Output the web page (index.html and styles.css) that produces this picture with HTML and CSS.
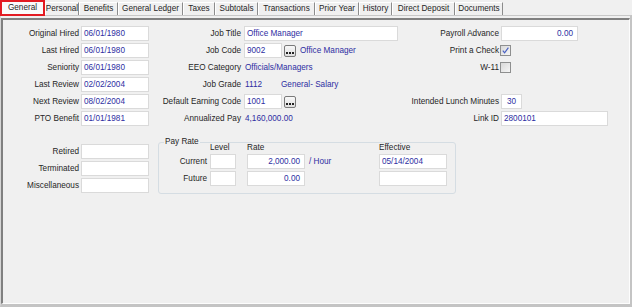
FILE: index.html
```html
<!DOCTYPE html>
<html>
<head>
<meta charset="utf-8">
<title>Employee - General</title>
<link rel="stylesheet" href="styles.css">
</head>
<body>
<div class="window">
  <div class="tabs">
    <div class="tab active">General</div>
    <div class="tab">Personal</div>
    <div class="tab">Benefits</div>
    <div class="tab">General Ledger</div>
    <div class="tab">Taxes</div>
    <div class="tab">Subtotals</div>
    <div class="tab">Transactions</div>
    <div class="tab">Prior Year</div>
    <div class="tab">History</div>
    <div class="tab">Direct Deposit</div>
    <div class="tab">Documents</div>
  </div>
  <div class="panel">
    <div class="inner">
      <div class="top">
        <div class="col col-left">
          <span class="lbl">Original Hired</span><div class="box">06/01/1980</div>
          <span class="lbl">Last Hired</span><div class="box">06/01/1980</div>
          <span class="lbl">Seniority</span><div class="box">06/01/1980</div>
          <span class="lbl">Last Review</span><div class="box">02/02/2004</div>
          <span class="lbl">Next Review</span><div class="box">08/02/2004</div>
          <span class="lbl">PTO Benefit</span><div class="box">01/01/1981</div>
        </div>
        <div class="col col-mid">
          <span class="lbl">Job Title</span>
          <div class="field"><div class="box full">Office Manager</div></div>
          <span class="lbl">Job Code</span>
          <div class="field"><div class="box code">9002</div><span class="ellip"><svg width="8" height="3" viewBox="0 0 8 3"><rect x="0" y="1" width="2" height="2" fill="#222"/><rect x="3" y="1" width="2" height="2" fill="#222"/><rect x="6" y="1" width="2" height="2" fill="#222"/></svg></span><span class="val after">Office Manager</span></div>
          <span class="lbl">EEO Category</span>
          <div class="field"><span class="val">Officials/Managers</span></div>
          <span class="lbl">Job Grade</span>
          <div class="field"><span class="val grade">1112</span><span class="val">General- Salary</span></div>
          <span class="lbl">Default Earning Code</span>
          <div class="field"><div class="box code">1001</div><span class="ellip"><svg width="8" height="3" viewBox="0 0 8 3"><rect x="0" y="1" width="2" height="2" fill="#222"/><rect x="3" y="1" width="2" height="2" fill="#222"/><rect x="6" y="1" width="2" height="2" fill="#222"/></svg></span></div>
          <span class="lbl">Annualized Pay</span>
          <div class="field"><span class="val">4,160,000.00</span></div>
        </div>
        <div class="col col-right">
          <span class="lbl">Payroll Advance</span>
          <div class="field"><div class="box advance num">0.00</div></div>
          <span class="lbl">Print a Check</span>
          <div class="field"><span class="check"><svg width="9" height="9" viewBox="0 0 9 9"><polyline points="1.8,4.6 3.6,6.8 7.4,1.6" fill="none" stroke="#4a62c4" stroke-width="1.2"/></svg></span></div>
          <span class="lbl">W-11</span>
          <div class="field"><span class="check"></span></div>
          <span class="lbl"></span><div class="field"></div>
          <span class="lbl">Intended Lunch Minutes</span>
          <div class="field"><div class="box lunch">30</div></div>
          <span class="lbl">Link ID</span>
          <div class="field"><div class="box link">2800101</div></div>
        </div>
      </div>
      <div class="bottom">
        <div class="col col-left">
          <span class="lbl">Retired</span><div class="box"></div>
          <span class="lbl">Terminated</span><div class="box"></div>
          <span class="lbl">Miscellaneous</span><div class="box"></div>
        </div>
        <div class="group">
          <span class="legend">Pay Rate</span>
          <div class="rates">
            <span></span><span class="head">Level</span><span class="head">Rate</span><span></span><span class="head">Effective</span>
            <span class="lbl">Current</span><div class="box level"></div><div class="box rate num">2,000.00</div><span class="val unit">/ Hour</span><div class="box eff">05/14/2004</div>
            <span class="lbl">Future</span><div class="box level"></div><div class="box rate num">0.00</div><span></span><div class="box eff"></div>
          </div>
        </div>
      </div>
    </div>
  </div>
</div>
</body>
</html>
```

FILE: styles.css
```css
* { box-sizing: border-box; }
html, body { margin: 0; padding: 0; }
body {
  width: 632px;
  height: 307px;
  overflow: hidden;
  background: #f0f0f0;
  font-family: "Liberation Sans", Arial, sans-serif;
  font-size: 8.2px;
  color: #262626;
}
.window { display: flex; flex-direction: column; height: 307px; }

/* tabs */
.tabs { display: flex; align-items: flex-end; height: 15px; position: relative; z-index: 1; }
.tab {
  height: 13px;
  display: flex;
  align-items: center;
  justify-content: center;
  white-space: nowrap;
  background: #f0f0f0;
  border-top: 1px solid #ffffff;
  border-left: 1px solid #ffffff;
  border-right: 1px solid #8c8c8c;
  color: #262626;
  line-height: 1;
  padding-top: 1px;
}
.tab.active {
  height: 16px;
  margin-bottom: -1px;
  background: #fafafa;
  border: 2px solid #e31b22;
}
.tab:nth-child(1) { width: 45px; }
.tab:nth-child(2) { width: 34px; }
.tab:nth-child(3) { width: 39px; }
.tab:nth-child(4) { width: 65px; }
.tab:nth-child(5) { width: 32px; }
.tab:nth-child(6) { width: 43px; }
.tab:nth-child(7) { width: 57px; }
.tab:nth-child(8) { width: 44px; }
.tab:nth-child(9) { width: 33px; }
.tab:nth-child(10) { width: 63px; }
.tab:nth-child(11) { width: 48px; }

/* panel frame */
.panel {
  flex: 1;
  border-top: 1px solid #c8c8c8;
  border-left: 1px solid #d6d6d6;
  border-right: 2px solid #c4c4c4;
  border-bottom: 3px solid #c4c4c4;
  padding-top: 2px;
  display: flex;
}
.inner {
  flex: 1;
  border-top: 2px solid #808080;
  border-left: 2px solid #808080;
  border-right: 1px solid #fdfdfd;
  border-bottom: 1px solid #fdfdfd;
  padding-top: 6px;
}

/* columns */
.top { display: flex; }
.col {
  display: grid;
  grid-auto-rows: 15px;
  row-gap: 2px;
  align-items: center;
}
.col-left { grid-template-columns: 76px 68px; column-gap: 2px; }
.col-mid { grid-template-columns: 89px 154px; column-gap: 3px; margin-left: 3px; }
.col-right { grid-template-columns: 90px 107px; column-gap: 2px; margin-left: 11px; }

.lbl { text-align: right; white-space: nowrap; }
.field { display: flex; align-items: center; height: 15px; }

.box {
  height: 15px;
  background: #ffffff;
  border: 1px solid #dadada;
  color: #2e2ea2;
  padding: 0 2px;
  display: flex;
  align-items: center;
  white-space: nowrap;
}
.num { justify-content: flex-end; padding-right: 4px; }
.box.full { width: 154px; }
.box.code { width: 38px; }
.box.advance { width: 77px; }
.box.lunch { width: 21px; justify-content: center; }
.box.link { width: 107px; }

.val { color: #2e2ea2; padding-left: 1px; white-space: nowrap; }
.val.grade { width: 36px; }
.val.after { margin-left: 3px; }

.ellip {
  width: 12px;
  height: 12px;
  margin-left: 2px;
  border: 1px solid #7a7a7a;
  border-radius: 2px;
  background: linear-gradient(#f8f8f8, #dedede);
  display: flex;
  align-items: flex-end;
  justify-content: center;
  padding-bottom: 2px;
}
.ellip svg { display: block; }

.check {
  width: 11px;
  height: 11px;
  margin-left: -1px;
  border: 1px solid #8e8f8f;
  background: linear-gradient(135deg, #d8d8d8, #f6f6f6);
  display: flex;
  align-items: center;
  justify-content: center;
}
.check svg { display: block; }

/* bottom */
.bottom { display: flex; align-items: flex-start; margin-top: 16px; }
.bottom .col-left { padding-top: 2px; }
.group {
  position: relative;
  margin-left: 9px;
  width: 298px;
  border: 1px solid #d5dde3;
  border-radius: 3px;
  padding: 0 8px 7px 0;
}
.legend {
  position: absolute;
  left: 5px;
  top: -6px;
  line-height: 10px;
  padding: 0 1px;
  background: #f0f0f0;
}
.rates {
  display: grid;
  grid-template-columns: 51px 37px 62px 70px 68px;
  grid-template-rows: 9px 15px 15px;
  row-gap: 2px;
  align-items: center;
}
.rates .lbl { padding-right: 3px; }
.head { line-height: 9px; }
.box.level { width: 26px; }
.box.rate { width: 58px; }
.box.eff { width: 68px; }
.unit { padding-left: 0; }
```
